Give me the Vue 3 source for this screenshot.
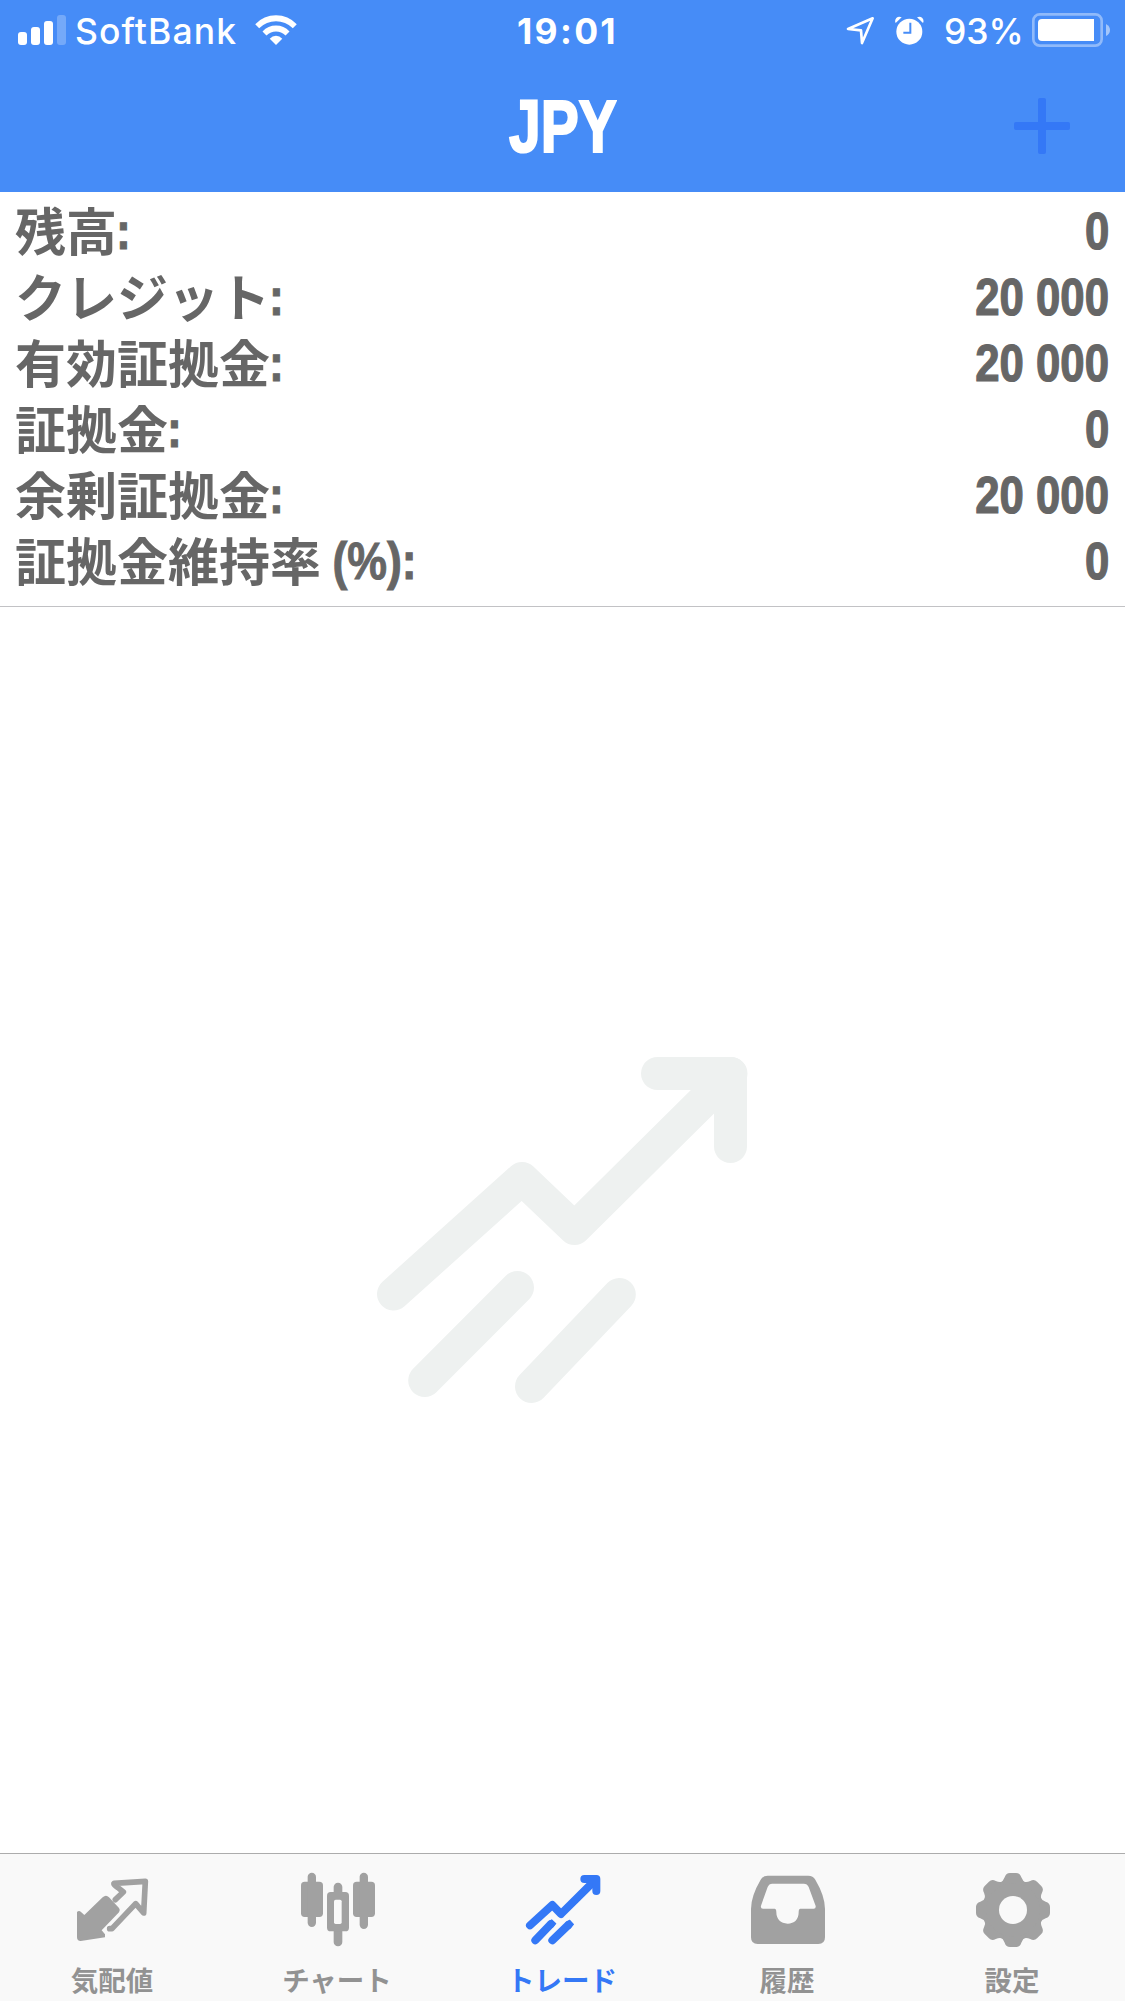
<template>
  <div class="app-screen">
    <header class="header">
      <div class="status-bar">
        <div class="status-left">
          <svg class="signal-icon" viewBox="0 0 48 30">
            <rect x="0" y="17" width="9" height="13" rx="3" />
            <rect x="13" y="12" width="9" height="18" rx="3" />
            <rect x="26" y="6" width="9" height="24" rx="3" />
            <rect x="39" y="0" width="9" height="30" rx="3" opacity="0.25" />
          </svg>
          <span class="carrier">SoftBank</span>
          <svg class="wifi-icon" viewBox="765 44 126 91">
            <path d="M765 72Q791 45 828 45Q865 45 891 72L879 84Q857 63 828 63Q799 63 777 84Z" />
            <path d="M787 94Q804 76 828 76Q852 76 869 94L857 106Q844 94 828 94Q812 94 799 106Z" />
            <path d="M809 116Q817 107 828 107Q839 107 847 116L828 135Z" />
          </svg>
        </div>
        <span class="clock">19:01</span>
        <div class="status-right">
          <svg class="location-icon" viewBox="66 48 87 87">
            <path d="M72 87L146 55L114 129L111 91Z" />
          </svg>
          <svg class="alarm-icon" viewBox="212 46 87 87">
            <circle cx="255" cy="93" r="39" />
            <path d="M214 67L232 50Q223 45 216 52Q210 59 214 67Z" />
            <path d="M296 67L278 50Q287 45 294 52Q300 59 296 67Z" />
            <path class="hands" d="M258 66V96H237" />
          </svg>
          <span class="battery-text">93%</span>
          <svg class="battery-icon" viewBox="621 39 234 102">
            <rect class="shell" x="625" y="43" width="205" height="94" rx="19" />
            <path d="M807 57H651Q639 57 639 69V111Q639 123 651 123H807Z" />
            <path d="M843 72Q855 78 855 90Q855 102 843 108Z" opacity="0.5" />
          </svg>
        </div>
      </div>
      <div class="nav-bar">
        <h1>JPY</h1>
        <button class="add-button" aria-label="追加">
          <svg viewBox="0 0 56 56">
            <rect x="0" y="24" width="56" height="8" rx="2" />
            <rect x="24" y="0" width="8" height="56" rx="2" />
          </svg>
        </button>
      </div>
    </header>

    <section class="account">
      <div v-for="row in accountRows" :key="row.label" class="account-row">
        <div class="account-label">
          <span class="name">{{ row.label }}</span>
          <span class="suffix">{{ row.suffix }}</span>
        </div>
        <span class="account-value">{{ row.value }}</span>
      </div>
    </section>

    <main class="positions">
      <svg class="empty-icon" viewBox="18 17 370 346">
        <path d="M33.5 254L162 138.5L214.5 188.5L371 33.5" />
        <path d="M297.5 33.5H370.5V106.5" />
        <path d="M64.7 340.5L157.5 247.5M171.5 346.5L259.3 254.5" />
      </svg>
    </main>

    <nav class="tab-bar">
      <button
        v-for="tab in tabs"
        :key="tab.id"
        class="tab"
        :class="{ active: tab.id === activeTab }"
        @click="activeTab = tab.id">
        <svg class="tab-icon" :viewBox="tab.viewBox">
          <g v-if="tab.id === 'quotes'">
            <path
              d="M111 216Q117 210 123 216L133 225L188 172Q198 163 207 172L237 204Q242 210 237 217L185 271L195 283V292L122 303Q111 303 111 292Z" />
            <path
              class="outline"
              d="M226 179L250 156L234 143Q219 132 222 130L316 124L311 219L287 191L216 266H209" />
          </g>
          <g v-else-if="tab.id === 'chart'">
            <rect x="123" y="125" width="66" height="106" rx="11" />
            <rect x="143" y="98" width="25" height="163" rx="12.5" />
            <rect x="279" y="125" width="66" height="106" rx="11" />
            <rect x="299" y="98" width="25" height="169" rx="12.5" />
            <rect x="221" y="128" width="26" height="60" rx="13" />
            <rect x="221" y="240" width="26" height="79" rx="13" />
            <rect x="201" y="156" width="66" height="118" rx="11" />
            <rect class="hole" x="222" y="179" width="23" height="73" rx="5" />
          </g>
          <g v-else-if="tab.id === 'trade'" class="trade">
            <path d="M149 256L216 195L242 222L346 119" />
            <path d="M312 117H348V153" />
            <path d="M165 301L211 253M216 301L264 255" />
            <path class="tip" d="M204 247L214 240L226 251L216 262ZM257 248L268 241L279 253L269 264Z" />
          </g>
          <g v-else-if="tab.id === 'history'">
            <path
              d="M203 107H325Q339 107 346 119Q375 168 375 207V292Q375 312 355 312H173Q153 312 153 292V207Q153 168 182 119Q189 107 203 107Z" />
            <path
              class="hole"
              d="M217 131H311Q322 131 326 141L347 198Q348 206 341 206H301Q296 206 296 217C296 239 283 251 263 251C242 251 229 237 229 217Q229 206 224 206H189Q181 206 183 197L203 141Q207 131 217 131Z" />
          </g>
          <g v-else>
            <path
              v-for="n in 8"
              :key="n"
              d="M225 128Q235 124 239 112Q243 99 255 99H273Q285 99 289 112Q293 124 303 128L264 210Z"
              :transform="`rotate(${n * 45} 264 210)`" />
            <circle cx="264" cy="210" r="80" />
            <circle class="hole" cx="264" cy="210" r="42" />
          </g>
        </svg>
        <span class="tab-label">{{ tab.label }}</span>
      </button>
    </nav>
  </div>
</template>

<script setup>
import { ref } from "vue";

const activeTab = ref("trade");

const accountRows = ref([
  { label: "残高", suffix: ":", value: "0" },
  { label: "クレジット", suffix: ":", value: "20 000" },
  { label: "有効証拠金", suffix: ":", value: "20 000" },
  { label: "証拠金", suffix: ":", value: "0" },
  { label: "余剰証拠金", suffix: ":", value: "20 000" },
  { label: "証拠金維持率", suffix: " (%):", value: "0" },
]);

const tabs = [
  { id: "quotes", label: "気配値", viewBox: "69 60 300 270" },
  { id: "chart", label: "チャート", viewBox: "84 60 300 270" },
  { id: "trade", label: "トレード", viewBox: "98 60 300 270" },
  { id: "history", label: "履歴", viewBox: "114 60 300 270" },
  { id: "settings", label: "設定", viewBox: "114 60 300 270" },
];
</script>

<style>
body {
  margin: 0;
  background: #fff;
}
</style>

<style scoped>
.app-screen {
  display: flex;
  flex-direction: column;
  height: 2001px;
  background: #fff;
  font-family: "Liberation Sans", "Noto Sans CJK JP", sans-serif;
}

svg {
  display: block;
  flex: none;
}

button {
  padding: 0;
  border: none;
  background: none;
  font: inherit;
}

.header {
  height: 192px;
  background: #468cf7;
  color: #fff;
}

.status-bar {
  display: grid;
  grid-template-columns: 1fr auto 1fr;
  align-items: center;
  height: 60px;
  padding: 0 15px 0 18px;
  font-family: Inter, sans-serif;
  font-size: 35.5px;
  font-weight: 500;
  line-height: 56px;
  fill: #fff;
}

.status-left,
.status-right {
  display: flex;
  align-items: center;
  height: 60px;
}

.status-right {
  justify-content: flex-end;
}

.signal-icon {
  width: 48px;
  height: 30px;
}

.carrier {
  width: 178px;
  padding-top: 4px;
  padding-left: 9px;
  box-sizing: border-box;
  letter-spacing: 1.1px;
}

.wifi-icon {
  width: 42px;
  height: 30px;
  margin-left: 11px;
}

.clock {
  padding-top: 4px;
  padding-left: 7px;
  font-weight: 700;
  letter-spacing: 2.3px;
}

.location-icon {
  width: 29px;
  height: 29px;
  fill: none;
  stroke: #fff;
  stroke-width: 8;
  stroke-linejoin: round;
}

.alarm-icon {
  width: 29px;
  height: 29px;
  margin-left: 20px;
}

.hands {
  fill: none;
  stroke: #468cf7;
  stroke-width: 6;
}

.battery-text {
  width: 88px;
  margin-left: 20px;
  padding-top: 4px;
}

.battery-icon {
  width: 78px;
  height: 34px;
}

.shell {
  fill: none;
  stroke: #fff;
  stroke-width: 8;
  opacity: 0.4;
}

.nav-bar {
  display: grid;
  grid-template-columns: 1fr auto 1fr;
  align-items: center;
  height: 132px;
  padding: 0 55px;
}

.nav-bar h1 {
  grid-column: 2;
  margin: 0;
  font-size: 75px;
  line-height: 132px;
  transform: scaleX(0.76);
  -webkit-text-stroke: 2.2px currentColor;
}

.add-button {
  justify-self: end;
}

.add-button svg {
  width: 56px;
  height: 56px;
  fill: #3478f6;
}

.account {
  height: 402px;
  padding: 6px 16px;
  border-bottom: 1px solid #c2c2c5;
  color: #666;
  font-size: 51px;
  font-weight: 700;
}

.account-row {
  display: flex;
  justify-content: space-between;
  height: 66px;
  line-height: 68px;
}

.account-label {
  display: flex;
  margin-left: -1px;
}

.name {
  font-family: "Noto Sans CJK JP", sans-serif;
  line-height: 62px;
}

.suffix {
  margin-left: -1px;
  white-space: pre;
  transform: scaleX(0.875);
  transform-origin: left;
  -webkit-text-stroke: 1px currentColor;
}

.account-value {
  transform: scaleX(0.857);
  transform-origin: right;
  -webkit-text-stroke: 1.2px currentColor;
}

.positions {
  flex: 1;
  display: flex;
  align-items: center;
  justify-content: center;
}

.empty-icon {
  width: 370px;
  height: 346px;
  overflow: visible;
  fill: none;
  stroke: #eef1f0;
  stroke-width: 33;
  stroke-linecap: round;
  stroke-linejoin: round;
}

.tab-bar {
  display: grid;
  grid-template-columns: repeat(5, 1fr);
  height: 147px;
  border-top: 1px solid #acacac;
  background: #f9f9f9;
}

.tab {
  display: flex;
  flex-direction: column;
  align-items: center;
  padding-top: 6px;
  color: #929292;
  fill: #a1a1a1;
}

.tab.active {
  color: #3478f6;
  fill: #3478f6;
}

.tab-icon {
  width: 100px;
  height: 90px;
}

.hole {
  fill: #f9f9f9;
}

.outline {
  fill: none;
  stroke: #a1a1a1;
  stroke-width: 17;
  stroke-linecap: round;
  stroke-linejoin: round;
}

.trade {
  fill: none;
  stroke: currentColor;
  stroke-width: 24;
  stroke-linecap: round;
  stroke-linejoin: round;
}

.trade .tip {
  fill: currentColor;
  stroke-width: 4;
}

.tab-label {
  margin-left: -1px;
  font-family: "Noto Sans CJK JP", sans-serif;
  font-size: 27.5px;
  font-weight: 700;
  line-height: 58px;
}
</style>
